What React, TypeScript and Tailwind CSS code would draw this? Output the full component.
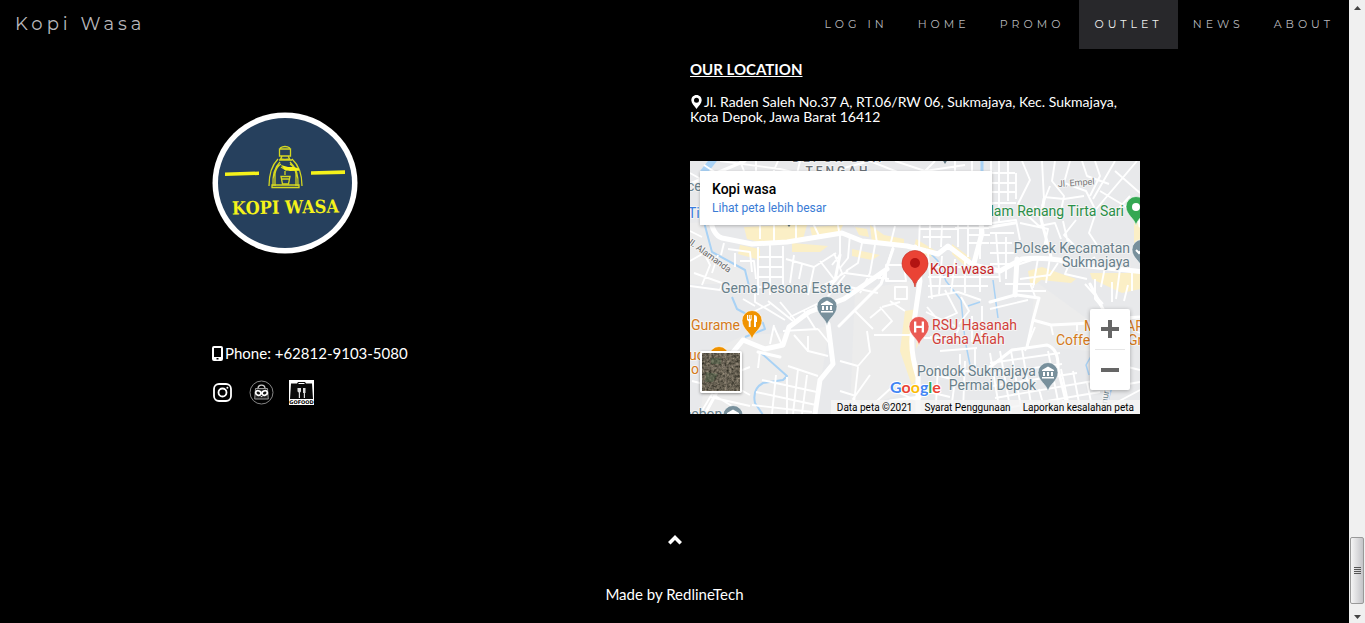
import React from "react";

const navItems = ["LOG IN", "HOME", "PROMO", "OUTLET", "NEWS", "ABOUT"];

function Navbar() {
  return (
    <header className="flex h-[49px] items-stretch justify-between pl-[15px] font-['Montserrat','Inter',sans-serif] text-[#c4c4c8]">
      <a href="#home" className="flex items-center text-[18px] tracking-[4px] text-[#b8b8bc]">
        Kopi Wasa
      </a>
      <nav className="flex text-[11px] tracking-[4px]">
        {navItems.map((item) => (
          <a
            key={item}
            href={"#" + item.toLowerCase().replace(" ", "")}
            className={
              item === "OUTLET"
                ? "flex items-center bg-[#28282b] px-[15px] text-[#f0f0f0]"
                : "flex items-center px-[15px] text-[#b8b8bc]"
            }
          >
            {item}
          </a>
        ))}
      </nav>
    </header>
  );
}

function Logo() {
  return (
    <svg width="146" height="142" viewBox="0 0 146 142" role="img" aria-label="Kopi Wasa">
      <ellipse cx="73" cy="71" rx="72.5" ry="70.5" fill="#fff" />
      <ellipse cx="73" cy="71" rx="67" ry="65" fill="#26405d" />
      <g fill="#f5f21a">
        <path d="M13 60.5 47 59.5V63L13 64zM99 59.3 133 58.3V62L99 62.8z" />
        <text
          x="73.500"
          y="101.500"
          textAnchor="middle"
          fontFamily="'Rockwell','DejaVu Serif Condensed','DejaVu Serif',serif"
          fontWeight="700"
          fontSize="18"
          transform="rotate(-1 73 100)"
        >
          KOPI WASA
        </text>
      </g>
      <g fill="none" stroke="#d6d820" strokeWidth="1.300">
        <path d="M68 36q5-3 10 0M67.500 37h11v7h-11zM70 44l-1.500 4M76 44l2 4M67 48h13M68 46q5 3 10 0" />
        <path d="M66 47Q57 56 57 74M68 50Q60 58 61 74M80 47Q90 56 90 74M78 50Q87 58 86 74M63 74V62q1-7 6-10M84 74V62q-1-7-6-10" />
        <path d="M60 73h27v2.500H60zM69 55l5 3 6-2M73 59v4" />
        <path d="M69 64.500h9l-1.500 7.500h-6zM70 67h8" />
      </g>
      <path d="M69 53l7 2h6l5 1.500v2.200l-9 .3-5-1z" fill="#f5f21a" />
    </svg>
  );
}

function PhoneIcon() {
  return (
    <svg width="11" height="15" viewBox="0 0 11 15" aria-hidden="true">
      <path
        fill="#fff"
        fillRule="evenodd"
        d="M2 0h7q2 0 2 2v11q0 2-2 2H2q-2 0-2-2V2Q0 0 2 0zm0 2v9h7V2zm2.500 10v1.500h2V12z"
      />
    </svg>
  );
}

function MarkerIcon() {
  return (
    <svg width="11" height="14" viewBox="0 0 11 14" className="ml-px mr-[2px] inline align-[-2px]" aria-hidden="true">
      <path
        fill="#fff"
        fillRule="evenodd"
        d="M5.500 0C2.400 0 .3 2.300.3 5.200.3 8.200 3.500 11 5.500 14c2-3 5.200-5.800 5.200-8.800C10.700 2.300 8.600 0 5.500 0zm0 2.800a2.500 2.500 0 1 1 0 5 2.500 2.500 0 0 1 0-5z"
      />
    </svg>
  );
}

function InstagramIcon() {
  return (
    <svg width="19" height="19" viewBox="0 0 19 19" aria-hidden="true" fill="none" stroke="#fff" strokeWidth="1.800">
      <rect x="1" y="1" width="17" height="17" rx="5" />
      <circle cx="9.500" cy="9.500" r="4" />
      <circle cx="14.400" cy="4.700" r="1" fill="#fff" stroke="none" />
    </svg>
  );
}

function StoreIcon() {
  return (
    <svg width="25" height="25" viewBox="0 0 25 25" aria-hidden="true" fill="none">
      <circle cx="12.500" cy="12.500" r="11.500" stroke="#858585" strokeWidth="1" />
      <path d="M9 8.500c0-4.500 7-4.500 7 0" stroke="#ccc" strokeWidth="1.300" />
      <path d="M6.500 8.500h12l.8 10.500H5.700z" fill="#222" stroke="#999" strokeWidth="1" />
      <ellipse cx="9.300" cy="13" rx="2.700" ry="2.200" fill="#111" stroke="#fff" strokeWidth="1.700" transform="rotate(25 9.300 13)" />
      <ellipse cx="15.700" cy="13" rx="2.700" ry="2.200" fill="#111" stroke="#fff" strokeWidth="1.700" transform="rotate(-25 15.700 13)" />
      <path d="M11.300 16h2.500l-1.200 1.300z" fill="#ddd" />
    </svg>
  );
}

function GofoodIcon() {
  return (
    <svg width="25" height="25" viewBox="0 0 25 25" aria-hidden="true">
      <rect width="25" height="25" fill="#fff" />
      <path d="M2 3.500h6l1-1.500h7l1 1.500h6L24 19H1z" fill="#0a0a0a" />
      <path d="M9.500 3.500h6" stroke="#fff" strokeWidth="1" />
      <path d="M8.500 8h3.500v3q0 1.300-1 1.500V18h-1.200v-5.500q-1.300-.2-1.300-1.500zM14 8h2.500v5H16v5h-1.200v-5H14z" fill="#ddd" />
      <text x="12.500" y="24.300" textAnchor="middle" fontSize="5" fontWeight="900" fontFamily="'DejaVu Sans','Inter',sans-serif" fill="#000">
        GOFOOD
      </text>
    </svg>
  );
}

function Pin({ x, y, color, children }: { x: number; y: number; color: string; children?: React.ReactNode }) {
  return (
    <g transform={`translate(${x} ${y})`}>
      <path d="M0 18.500C-1.500 11-10 8-10-.5a10 10 0 0 1 20 0C10 8 1.500 11 0 18.500z" fill={color} stroke="#fff" strokeWidth=".6" />
      {children}
    </g>
  );
}

function Museum() {
  return <path d="M-6-3 0-6.500 6-3v1H-6zM-5-1h2v4h-2zM-1-1h2v4h-2zM3-1h2v4H3zM-6 4H6v1.500H-6z" fill="#fff" />;
}

function Fork() {
  return <path d="M-5-6h1v4h.8v-4h1v4h.8v-4h1v5l-1 1.500V6h-1.800V.5L-5-1zM2-6q3 0 3 3v4H4v5H2z" fill="#fff" />;
}

function MapDrawing() {
  return (
    <svg
      className="block h-full w-full"
      viewBox="0 0 450 253"
      preserveAspectRatio="xMidYMid slice"
      fontFamily="Roboto, sans-serif"
      role="img"
      aria-label="Map around Kopi wasa"
    >
      <rect width="450" height="253" fill="#e8e9eb" />
      <path d="M55 174 97 172 140 165 125 253H10L20 190zM165 130l55-10v110l-60 20zM345 120l55 40v30l-60-5zM0 62l16-1 8 32 34 18v12H0z" fill="#ececec" />
      <g fill="#fbefc6">
        <path d="M54 66l43-2 20 0-4 14-40 4-16-4zM120 66l33-2-4 9-26 6zM50 84l20 4 0 11-22-6zM102 82l36 3-8 6-28 0zM165 66l12 2 2 8-10-2zM180 64l14 10 20 4v8l-32-4zM162 88l28 6-8 5-20-4zM226 78l20 12-5 6-18-6zM262 83l19 14-6 8-13-12zM338 110l14-4 34 12-5 4-30-3-10 8zM400 112h50v16l-18 4-30-14zM215 150l12-2-6 40 8 25-7 12-12-35zM228 162h6v12l-8 14zM444 62h6v20h-6z" />
      </g>
      <g fill="none" stroke="#a9d2f5" strokeWidth="2" strokeLinejoin="round">
        <path d="M14 61 22 91 55 109l4 16M42 136l5 12 26 14 2 6-20 8M70 191l27 24-4 4-20 3q-11 6-8 20l8 12" />
        <path d="M13 12 24-2" strokeWidth="7" />
        <path d="M292 0v12" strokeWidth="3" />
        <path d="M236 88l12 12 8 20 15 19 4 40 6 30M303 119l5 38M290 141l-12 4M404 190l-8 14 3 10M418 240l4-14" strokeWidth="1.500" />
      </g>
      <g fill="none" stroke="#fff" strokeWidth="1.900" strokeLinejoin="round">
        <path d="M0 12l25 14M14 4l40 26M30 0l60 8 20 5M50 0l4 10M66 0v16l20-4M88 0l-6 14M110 0l-3 13 40-3M150 8l30-8M180 0l35 14M205 0l30 10 40-6M235 10l10-10M265 0v10M282 0v12h20" />
        <path d="M0 70l12 6M0 100l14-8 6 12-8 20M4 112l28 10M28 94l-6 18M38 88l22 3 2 20M45 92v14M34 82l-3 12M50 100h14l2 18M0 125l30 4 2-6" />
        <path d="M68 86v48M80 84v50M93 85v46M68 96h25M68 106h25M68 116h25M68 126h25M104 94l-4 28M96 98l28 8-6 28M124 106l22-14M112 103l-3 15M130 100l14 18 14-8M144 92l8 20-12 14M150 72v22l-8 10M70 62v16M84 60v20M106 64v14M122 60l8 17M146 54l3 16" />
        <path d="M160 73l-2 24-8 10M172 82l-4 20-12 8M185 84l-5 28-10 20M203 86l-7 22-8 10M155 112l44 6M150 124l38 8M165 64l-6-9M184 62l3 20M205 65l-5 20M230 55l-1 32M240 62v25M252 64l-1 22M230 68h38M233 76h28M268 56v30M278 54v42M290 50v48M265 67h34M278 82h21M278 74h22" />
        <path d="M238 92l4 46M252 95l-3 38M265 98l-4 35M275 100v32M290 106v25M236 106h48M238 116h72M238 125h60M238 136l30-5 23 8M255 129l12 23-18 8-12-14M271 136l8 14-10 13M236 151l33 16-5 10h-30M240 176l34 4M282 155v26M292 145v38" />
        <path d="M301 0v62M309 0v65M318 0v40M326 12v26M301 12h24M301 22h25M301 31h24M301 42h25M302 62l24-3 4 20M332 0l8 19-12 24 20 12M352 0l2 38M365 0l-3 20 12 15-3 15M380 0l-6 22 22 8 10 20M392 0l5 15 22 8M405 0l5 15-10 20M425 0l-22 38M447 0l-45 53M425 10l25 22M410 30l40 24M440 35l-20 22M354 36l20 2 20-3M360 25l-8 20M346 45l-8 10 11 10 16-3 6 16M330 62l28 6-4 18M373 60l5 22M386 59l-12 15 10 10M405 54l-6 18 10 15" />
        <path d="M300 72h24M300 82h22M300 92h24M300 103h20M306 73l4 48M316 76v42M330 118l30-4 8-12M348 97l-5 30M360 96l-4 26M380 101l-5 12 22 5M392 106l13-10M415 106l-4 20M430 108l-4 30M442 112v18M326 130h30M327 104l18-6M300 148l38-9" />
        <path d="M65 124v17l30 18M78 140l25 20M90 141l15 18M65 145l-12-7M100 156l35-17 20-25M114 150l12 19M125 145l7 9M80 183l4-19M70 190l-2 17M92 184l-8-18M104 174l14 16 20 5M118 175v16M93 170l35-2M128 168l12 15M65 150l15-7" />
        <path d="M72 219l55 12M66 231l60 13M62 244l60 7M86 214l-4 39M97 216v37M108 208l-5 45M117 214l-5 39M98 205l30 10M38 202l4 22 18 10M20 236l40 9M10 253l12-20 30 18M60 206l-18 7M2 220l32 8" />
        <path d="M150 200l18 5 12-14-3-21M168 206l-5 45M180 214l-17 24 12 14M150 230l16 5M184 174h39M192 170l10-10-12-14M192 146l18-5M180 157l12-10M165 150l18 18M200 140l15 10M216 120h-20v-16h18zM205 138v-12h12v12zM178 248l22-20 28 12M235 211l30 8-4 30M248 205l-2 38M260 210h30M235 230l25 6M275 200l-2 50" />
        <path d="M250 190l37-3M270 193v23M285 187v20M300 192l10 60M310 190l11 62M321 190l11 62M332 188l10 61M300 202l70-10M300 213l72-10M302 225l85-13M305 237l98-17M310 248l100-17M355 250l-6-22M370 250l-12-60M380 250l-9-42M390 247l-7-37M402 246l-5-25M345 166l-10 24M361 164l2 10M387 162v8M436 164l14 8M437 196l-17 30 30-5M420 245l30-16M426 203l24 6" />
        <path d="M315 123h30M340 122l6 16M405 118v20l15 18M422 121v20M438 124l-4 16M395 123l18 20M374 253l-1-14" />
      </g>
      <g fill="none" stroke="#fff" strokeWidth="3" strokeLinejoin="round" strokeLinecap="round">
        <path d="M0 23 55 0M150 94l-5 25-20 10M203 88l-12 35-42 42M325 134l-25 7M327 134l22 3-6 22-6 27M343 159l18 5 40-2M200 240l30-4M300 206l22-17 35-5q12 4 11 24l10 40M400 123l18 35 32-2M300 66l25-4M354 38l-3 20 10 38M448 45l2 20M90 196l-22-5M15 253l12-22" />
      </g>
      <g fill="none" stroke="#fff" strokeWidth="5" strokeLinejoin="round" strokeLinecap="round">
        <path d="M20 54q2 20 12 23l30 6 35-2 55-9 20 8 45 5 31 8 10-8 12 9 13 10 27 6 22-12q30-3 58 6l75 8M225 86l5 34-7 48q-4 20 5 48v37M290 50l2 22-8 30M25 213l28-34 22 9 18-4 6-18 20-15 35-13 43-30M138 163l5 40-13 16-5 34M327 98l-2 36" />
      </g>
      <g fontSize="14" stroke="#f4f4f4" strokeWidth="2" strokeLinejoin="round" paintOrder="stroke" fill="#68808b">
        <g fill="#6b7178" fontSize="12" fontWeight="500" letterSpacing="3" textAnchor="middle">
          <text x="148" y="1">DEPOK DUA</text>
          <text x="148" y="14">TENGAH</text>
        </g>
        <text x="-3" y="30">ce</text>
        <text x="-2" y="57" fill="#3a7de0">Tip</text>
        <text x="-4" y="81" fontSize="9" fill="#666" transform="rotate(36 -4 81)">Jl. Alamanda</text>
        <text x="368" y="26" fontSize="9" fill="#777" transform="rotate(-4 368 26)">Jl. Empel</text>
        <text x="434" y="55" textAnchor="end" fill="#2b8f48">lam Renang Tirta Sari</text>
        <text x="440" y="92" textAnchor="end">Polsek Kecamatan</text>
        <text x="440" y="106" textAnchor="end">Sukmajaya</text>
        <text x="240" y="113" fill="#c5221f">Kopi wasa</text>
        <text x="31" y="132">Gema Pesona Estate</text>
        <text x="1" y="169" fill="#d57a1a">Gurame</text>
        <text x="-1" y="199" fill="#d57a1a">uc</text>
        <text x="1" y="213" fill="#d57a1a">o</text>
        <text x="242" y="169" fill="#d0403a">RSU Hasanah</text>
        <text x="242" y="183" fill="#d0403a">Graha Afiah</text>
        <text x="346" y="215" textAnchor="end">Pondok Sukmajaya</text>
        <text x="346" y="229" textAnchor="end">Permai Depok</text>
        <text x="394" y="170" fill="#d57a1a">M</text>
        <text x="436" y="170" fill="#d57a1a">AR</text>
        <text x="366" y="184" fill="#d57a1a">Coffee</text>
        <text x="438" y="184" fill="#d57a1a">Gr</text>
        <text x="-6" y="258">cebon</text>
        <text x="417" y="243" fontSize="9" transform="rotate(-80 417 243)">nur</text>
      </g>
      <path d="M252-2l3 5 3-5M96 62l3 4 3-4" fill="#5f7681" />
      <Pin x={446} y={46} color="#34a853"><circle r="4" fill="#fff" /></Pin>
      <Pin x={452} y={89} color="#78909c"><path d="M-6 0-3 3 3-3" stroke="#fff" strokeWidth="2" fill="none" /></Pin>
      <Pin x={137} y={146} color="#78909c"><Museum /></Pin>
      <Pin x={62} y={160} color="#f09300"><Fork /></Pin>
      <Pin x={29} y={196} color="#f09300" />
      <Pin x={229} y={166} color="#ea5b54"><path d="M-5-5.500h2.300v4.300h5.400v-4.300H5V5.500H2.700V1h-5.400v4.500H-5z" fill="#fff" /></Pin>
      <Pin x={358} y={212} color="#78909c"><Museum /></Pin>
      <Pin x={43} y={255} color="#78909c"><Museum /></Pin>
      <path d="M225 126c-1-10-13-13-13-23.500a13 13 0 0 1 26 0c0 10.500-12 13.500-13 23.500z" fill="#ea4335" stroke="#c9372c" strokeWidth=".7" />
      <circle cx="225" cy="102" r="5" fill="#b31412" />
      <text x="200" y="232" fontFamily="'Product Sans','Lato',sans-serif" fontSize="16" fontWeight="700" stroke="#fff" strokeWidth="2" paintOrder="stroke">
        <tspan fill="#4285f4">G</tspan>
        <tspan fill="#ea4335">o</tspan>
        <tspan fill="#fbbc05">o</tspan>
        <tspan fill="#4285f4">g</tspan>
        <tspan fill="#34a853">l</tspan>
        <tspan fill="#ea4335">e</tspan>
      </text>
    </svg>
  );
}

function SatelliteThumb() {
  return (
    <svg viewBox="0 0 38 38" className="block h-full w-full" aria-hidden="true">
      <defs>
        <filter id="terrain" x="0" y="0" width="100%" height="100%" colorInterpolationFilters="sRGB">
          <feTurbulence type="fractalNoise" baseFrequency=".4" numOctaves="3" seed="4" />
          <feColorMatrix values=".6 0 0 0 .1  .55 0 0 0 .1  .5 0 0 0 .07  0 0 0 0 1" />
        </filter>
      </defs>
      <rect width="38" height="38" filter="url(#terrain)" />
      <path d="M9 5h10v6H9zM4 19l12 2-5 8H3z" fill="#4c6148" opacity=".45" />
      <path d="M0 16 38 12M21 0l4 38" stroke="#8c8075" opacity=".5" fill="none" />
    </svg>
  );
}

function MapPanel() {
  return (
    <div className="relative h-[253px] w-full max-w-[450px] overflow-hidden font-['Roboto',sans-serif] text-black">
      <MapDrawing />
      <div className="absolute left-[10px] top-[10px] h-[54px] w-[292px] bg-white px-3 pt-[9px] shadow-[0_1px_3px_rgba(0,0,0,0.25)]">
        <div className="text-[14px] font-medium leading-[18px]">Kopi wasa</div>
        <a href="#map" className="block text-[12px] leading-[20px] text-[#3a7bd5]">
          Lihat peta lebih besar
        </a>
      </div>
      <button
        type="button"
        aria-label="Satellite view"
        className="absolute left-[10px] top-[190px] h-[42px] w-[42px] overflow-hidden rounded-[2px] border-2 border-white shadow-[0_1px_3px_rgba(0,0,0,0.4)]"
      >
        <SatelliteThumb />
      </button>
      <div className="absolute right-[10px] top-[148px] flex h-[81px] w-10 flex-col items-center rounded-[2px] bg-white shadow-[0_1px_4px_rgba(0,0,0,0.3)]">
        <button type="button" aria-label="Zoom in" className="flex w-full flex-1 items-center justify-center">
          <svg width="18" height="18" viewBox="0 0 18 18"><path d="M7 0h4v7h7v4h-7v7H7v-7H0V7h7z" fill="#666" /></svg>
        </button>
        <div className="h-px w-[30px] bg-[#e6e6e6]" />
        <button type="button" aria-label="Zoom out" className="flex w-full flex-1 items-center justify-center">
          <svg width="18" height="18" viewBox="0 0 18 18"><path d="M0 7h18v4H0z" fill="#666" /></svg>
        </button>
      </div>
      <div className="absolute bottom-0 right-0 flex h-[14px] gap-3 bg-[#f5f5f5]/80 px-[6px] text-[10px] leading-[15px]">
        <span>Data peta ©2021</span>
        <a href="#terms">Syarat Penggunaan</a>
        <a href="#report">Laporkan kesalahan peta</a>
      </div>
    </div>
  );
}

function ScrollTrack() {
  return (
    <div aria-hidden="true" className="flex w-4 shrink-0 flex-col items-center bg-[#f0f0f0]">
      <svg width="16" height="17" viewBox="0 0 16 17"><path d="M5 10h7L8.500 6z" fill="#444" /></svg>
      <div className="flex-1" />
      <div className="flex h-[67px] w-[14px] flex-col items-center justify-center gap-px rounded-[2px] border border-[#999] bg-linear-to-r from-[#f5f5f5] to-[#c4c4c8]">
        <div className="h-px w-[7px] bg-[#555]" />
        <div className="h-px w-[7px] bg-[#555]" />
        <div className="h-px w-[7px] bg-[#555]" />
        <div className="h-px w-[7px] bg-[#555]" />
      </div>
      <svg width="16" height="19" viewBox="0 0 16 19"><path d="M5 11h7l-3.500 4z" fill="#444" /></svg>
    </div>
  );
}

export default function App() {
  return (
    <div className="flex min-h-screen bg-black font-['Lato',sans-serif] text-white">
      <div className="flex min-w-0 flex-1 flex-col">
        <Navbar />
        <main className="mx-auto grid w-full max-w-[955px] grid-cols-[minmax(0,1fr)_478px]">
          <section className="flex flex-col items-start pl-[15px] pt-[63px]">
            <Logo />
            <p className="mt-[89px] flex items-center gap-[2px] text-[15px] leading-[20px]">
              <PhoneIcon />
              Phone: +62812-9103-5080
            </p>
            <div className="mt-[17px] flex items-center">
              <a href="#instagram" aria-label="Instagram" className="ml-px mr-[17px]"><InstagramIcon /></a>
              <a href="#store" aria-label="Store" className="mr-[15px]"><StoreIcon /></a>
              <a href="#gofood" aria-label="GoFood"><GofoodIcon /></a>
            </div>
          </section>
          <section className="pl-4 pr-3 pt-[11px]">
            <h2 className="text-[15px] font-bold leading-[18px] underline">OUR LOCATION</h2>
            <p className="mt-4 text-[14px] leading-[15px]">
              <MarkerIcon />
              Jl. Raden Saleh No.37 A, RT.06/RW 06, Sukmajaya, Kec. Sukmajaya, Kota Depok, Jawa Barat 16412
            </p>
            <div className="mt-[37px]">
              <MapPanel />
            </div>
          </section>
        </main>
        <footer className="mt-[121px] flex flex-col items-center">
          <a href="#top" aria-label="Back to top">
            <svg width="14" height="10" viewBox="0 0 14 10"><path d="M7 0 14 7 11.500 9.500 7 5 2.500 9.500 0 7z" fill="#fff" /></svg>
          </a>
          <p className="mt-[38px] text-[15px] leading-[22px]">Made by RedlineTech</p>
        </footer>
      </div>
      <ScrollTrack />
    </div>
  );
}
